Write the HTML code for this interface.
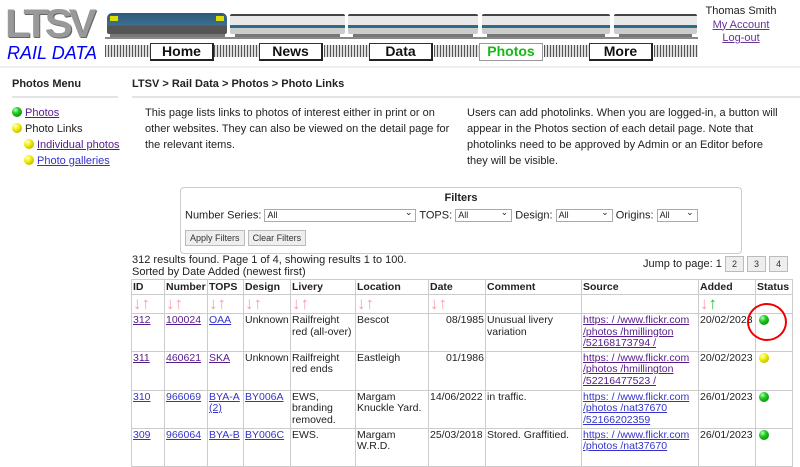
<!DOCTYPE html>
<html><head><meta charset="utf-8">
<style>
*{margin:0;padding:0;box-sizing:border-box}
body{width:800px;height:450px;overflow:hidden;background:#fff;font-family:"Liberation Sans",Arial,sans-serif;font-size:11px;color:#222;position:relative}
.a{position:absolute}
a{color:#3333cc;text-decoration:underline}
a.v{color:#551a8b}
.btn{position:absolute;top:43px;width:64px;height:18px;background:#fff;border:1px solid #333;border-right:2px solid #222;border-bottom:2px solid #222;font-size:14px;font-weight:bold;text-align:center;line-height:15px;color:#111}
.trk{position:absolute;top:45px;height:12px;background:repeating-linear-gradient(90deg,#555 0 1px,#ddd 1px 3px)}
.coach{position:absolute;top:14px;height:20px;background:linear-gradient(#444 0 2px,#e8e8e8 2px 11px,#2e6a8a 11px 14px,#ccc 14px 20px);border-radius:2px}
.wh{position:absolute;top:34px;height:5px;background:#777}
.dot{display:inline-block;width:10px;height:10px;border-radius:50%;vertical-align:-1px;margin-right:3px}
.g{background:radial-gradient(circle at 35% 30%,#bfb 0,#2c2 35%,#070 100%)}
.y{background:radial-gradient(circle at 35% 30%,#ffc 0,#ee0 40%,#a90 100%)}
.sel{display:inline-block;height:13px;border:1px solid #aaa;font-size:9px;line-height:11px;padding-left:2px;vertical-align:middle;position:relative;background:#fff}
.sel:after{content:"⌄";position:absolute;right:3px;top:-3px;font-size:9px}
.pb{display:inline-block;border:1px solid #bbb;background:#eee;font-size:9px;padding:2px 4px;color:#333}
table{position:absolute;left:131px;top:279px;border-collapse:collapse;width:661px;table-layout:fixed}
td,th{border:1px solid #ccc;vertical-align:top;text-align:left;padding:1px 1px;font-size:10.5px;line-height:11.5px;overflow:hidden}
th{height:15px;font-weight:bold;line-height:12px}
.ar{color:#f9a;font-size:17px;font-weight:bold;letter-spacing:0;line-height:16px}
</style></head><body>
<div class="a" style="left:5px;top:6px;font-size:40px;font-weight:bold;color:#999;letter-spacing:-4px;line-height:36px;transform:scaleX(1.05);transform-origin:left;text-shadow:1px 1px 0 #666">LTSV</div>
<div class="a" style="left:7px;top:43px;font-size:18px;font-style:italic;color:#00f;line-height:20px">RAIL DATA</div>
<div class="a" style="left:107px;top:13px;width:120px;height:21px;background:linear-gradient(#2e5a78,#3d7090 60%,#555 60%);border-radius:5px 5px 2px 2px"></div>
<div class="a" style="left:110px;top:16px;width:8px;height:5px;background:#dd0"></div>
<div class="a" style="left:216px;top:16px;width:8px;height:5px;background:#dd0"></div>
<div class="wh" style="left:110px;width:115px"></div>
<div class="coach" style="left:230px;width:115px"></div><div class="wh" style="left:235px;width:105px"></div>
<div class="coach" style="left:348px;width:130px"></div><div class="wh" style="left:353px;width:120px"></div>
<div class="coach" style="left:482px;width:128px"></div><div class="wh" style="left:487px;width:118px"></div>
<div class="coach" style="left:614px;width:83px"></div><div class="wh" style="left:619px;width:73px"></div>
<div class="a" style="left:105px;top:37px;width:593px;height:2px;background:#888"></div>
<div class="trk" style="left:105px;width:45px"></div><div class="trk" style="left:214px;width:45px"></div>
<div class="trk" style="left:324px;width:45px"></div><div class="trk" style="left:434px;width:45px"></div>
<div class="trk" style="left:544px;width:45px"></div><div class="trk" style="left:654px;width:44px"></div>
<div class="btn" style="left:150px">Home</div>
<div class="btn" style="left:259px">News</div>
<div class="btn" style="left:369px">Data</div>
<div class="btn" style="left:479px;color:#1b1;border:1px solid #999">Photos</div>
<div class="btn" style="left:589px">More</div>
<div class="a" style="left:700px;top:5px;width:82px;text-align:center;line-height:13.5px">Thomas Smith<br><a style="color:#639">My Account</a><br><a style="color:#639">Log-out</a></div>
<div class="a" style="left:0;top:66px;width:800px;height:2px;background:#eee"></div>

<div class="a" style="left:12px;top:78px;font-weight:bold">Photos Menu</div>
<div class="a" style="left:12px;top:96px;width:106px;height:2px;background:#e4e4e4"></div>
<div class="a" style="left:12px;top:105px;line-height:16px">
<div><span class="dot g"></span><a class="v">Photos</a></div>
<div><span class="dot y"></span>Photo Links</div>
<div style="padding-left:12px"><span class="dot y"></span><a class="v">Individual photos</a></div>
<div style="padding-left:12px"><span class="dot y"></span><a>Photo galleries</a></div>
</div>
<div class="a" style="left:132px;top:78px;font-weight:bold">LTSV &gt; Rail Data &gt; Photos &gt; Photo Links</div>
<div class="a" style="left:132px;top:96px;width:668px;height:2px;background:#e4e4e4"></div>
<div class="a" style="left:145px;top:105px;width:315px;line-height:16px">This page lists links to photos of interest either in print or on other websites. They can also be viewed on the detail page for the relevant items.</div>
<div class="a" style="left:467px;top:105px;width:312px;line-height:16px">Users can add photolinks. When you are logged-in, a button will appear in the Photos section of each detail page. Note that photolinks need to be approved by Admin or an Editor before they will be visible.</div>

<div class="a" style="left:180px;top:187px;width:562px;height:67px;border:1px solid #ccc;border-radius:4px"></div>
<div class="a" style="left:180px;top:192px;width:562px;text-align:center;font-weight:bold">Filters</div>
<div class="a" style="left:185px;top:209px;white-space:nowrap">Number Series: <span class="sel" style="width:152px">All</span> TOPS: <span class="sel" style="width:57px">All</span> Design: <span class="sel" style="width:57px">All</span> Origins: <span class="sel" style="width:41px">All</span></div>
<div class="a" style="left:185px;top:230px"><span class="pb">Apply Filters</span> <span class="pb">Clear Filters</span></div>
<div class="a" style="left:132px;top:255px;line-height:11.5px">312 results found. Page 1 of 4, showing results 1 to 100.<br>Sorted by Date Added (newest first)</div>
<div class="a" style="left:643px;top:256px;white-space:nowrap">Jump to page: 1 <span class="pb" style="padding:2px 6px">2</span> <span class="pb" style="padding:2px 6px">3</span> <span class="pb" style="padding:2px 6px">4</span></div>

<table>
<colgroup><col style="width:33px"><col style="width:43px"><col style="width:36px"><col style="width:47px"><col style="width:65px"><col style="width:73px"><col style="width:57px"><col style="width:96px"><col style="width:117px"><col style="width:57px"><col style="width:37px"></colgroup>
<tr><th>ID</th><th>Number</th><th>TOPS</th><th>Design</th><th>Livery</th><th>Location</th><th>Date</th><th>Comment</th><th>Source</th><th>Added</th><th>Status</th></tr>
<tr style="height:19px"><td class="ar">↓↑</td><td class="ar">↓↑</td><td class="ar">↓↑</td><td class="ar">↓↑</td><td class="ar">↓↑</td><td class="ar">↓↑</td><td class="ar">↓↑</td><td></td><td></td><td class="ar">↓<span style="color:#3b3">↑</span></td><td></td></tr>
<tr style="height:37px"><td><a class="v">312</a></td><td><a class="v">100024</a></td><td><a>OAA</a></td><td>Unknown</td><td>Railfreight red (all-over)</td><td>Bescot</td><td style="text-align:right">08/1985</td><td>Unusual livery variation</td><td><a class="v">https: / /www.flickr.com /photos /hmillington /52168173794 /</a></td><td>20/02/2023</td><td><span class="dot g" style="margin-left:2px"></span></td></tr>
<tr style="height:39px"><td><a class="v">311</a></td><td><a class="v">460621</a></td><td><a class="v">SKA</a></td><td>Unknown</td><td>Railfreight red ends</td><td>Eastleigh</td><td style="text-align:right">01/1986</td><td></td><td><a class="v">https: / /www.flickr.com /photos /hmillington /52216477523 /</a></td><td>20/02/2023</td><td><span class="dot y" style="margin-left:2px"></span></td></tr>
<tr style="height:38px"><td><a>310</a></td><td><a>966069</a></td><td><a>BYA-A (2)</a></td><td><a>BY006A</a></td><td>EWS, branding removed.</td><td>Margam Knuckle Yard.</td><td>14/06/2022</td><td>in traffic.</td><td><a>https: / /www.flickr.com /photos /nat37670 /52166202359</a></td><td>26/01/2023</td><td><span class="dot g" style="margin-left:2px"></span></td></tr>
<tr style="height:38px"><td><a>309</a></td><td><a>966064</a></td><td><a>BYA-B</a></td><td><a>BY006C</a></td><td>EWS.</td><td>Margam W.R.D.</td><td>25/03/2018</td><td>Stored. Graffitied.</td><td><a>https: / /www.flickr.com /photos /nat37670</a></td><td>26/01/2023</td><td><span class="dot g" style="margin-left:2px"></span></td></tr>
</table>
<div class="a" style="left:747px;top:303px;width:40px;height:38px;border:2px solid #e00;border-radius:50%"></div>
</body></html>
